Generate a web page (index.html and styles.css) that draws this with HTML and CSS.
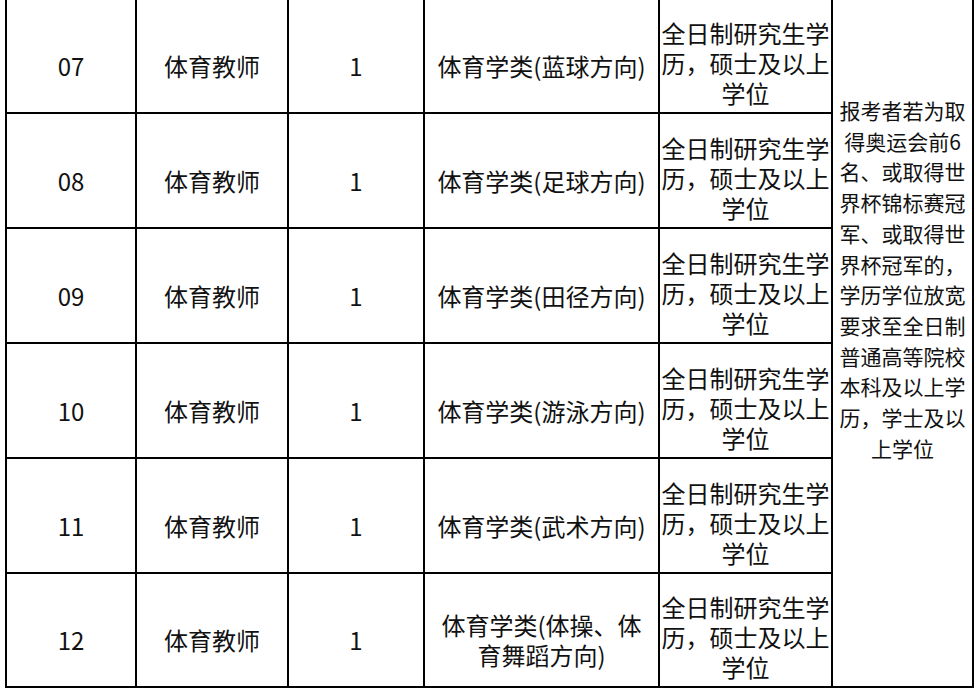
FILE: index.html
```html
<!DOCTYPE html>
<html lang="zh-CN">
<head>
<meta charset="utf-8">
<title>招聘岗位表</title>
<link rel="stylesheet" href="styles.css">
</head>
<body>
<table class="grid">
  <colgroup>
    <col class="col-no">
    <col class="col-post">
    <col class="col-num">
    <col class="col-major">
    <col class="col-edu">
    <col class="col-note">
  </colgroup>
  <tbody>
    <tr class="row">
      <td class="cell first">07</td>
      <td class="cell">体育教师</td>
      <td class="cell">1</td>
      <td class="cell">体育学类(蓝球方向)</td>
      <td class="cell edu"><div class="edu-text">全日制研究生学<br>历，硕士及以上<br>学位</div></td>
      <td class="cell note" rowspan="6"><div class="note-text">报考者若为取<br>得奥运会前6<br>名、或取得世<br>界杯锦标赛冠<br>军、或取得世<br>界杯冠军的，<br>学历学位放宽<br>要求至全日制<br>普通高等院校<br>本科及以上学<br>历，学士及以<br>上学位</div></td>
    </tr>
    <tr class="row">
      <td class="cell first">08</td>
      <td class="cell">体育教师</td>
      <td class="cell">1</td>
      <td class="cell">体育学类(足球方向)</td>
      <td class="cell edu"><div class="edu-text">全日制研究生学<br>历，硕士及以上<br>学位</div></td>
    </tr>
    <tr class="row">
      <td class="cell first">09</td>
      <td class="cell">体育教师</td>
      <td class="cell">1</td>
      <td class="cell">体育学类(田径方向)</td>
      <td class="cell edu"><div class="edu-text">全日制研究生学<br>历，硕士及以上<br>学位</div></td>
    </tr>
    <tr class="row">
      <td class="cell first">10</td>
      <td class="cell">体育教师</td>
      <td class="cell">1</td>
      <td class="cell">体育学类(游泳方向)</td>
      <td class="cell edu"><div class="edu-text">全日制研究生学<br>历，硕士及以上<br>学位</div></td>
    </tr>
    <tr class="row">
      <td class="cell first">11</td>
      <td class="cell">体育教师</td>
      <td class="cell">1</td>
      <td class="cell">体育学类(武术方向)</td>
      <td class="cell edu"><div class="edu-text">全日制研究生学<br>历，硕士及以上<br>学位</div></td>
    </tr>
    <tr class="row last">
      <td class="cell first">12</td>
      <td class="cell">体育教师</td>
      <td class="cell">1</td>
      <td class="cell two">体育学类(体操、体<br>育舞蹈方向)</td>
      <td class="cell edu"><div class="edu-text">全日制研究生学<br>历，硕士及以上<br>学位</div></td>
    </tr>
  </tbody>
</table>
</body>
</html>
```

FILE: styles.css
```css
html, body {
  margin: 0;
  padding: 0;
  background: #ffffff;
}

body {
  font-family: "Noto Sans CJK SC", "Microsoft YaHei", "Noto Sans", sans-serif;
  color: #111111;
  overflow: hidden;
}

.grid {
  table-layout: fixed;
  border-collapse: separate;
  border-spacing: 0;
  width: 969px;
  margin: -1px 0 0 5px;
}

.col-no { width: 132px; }
.col-post { width: 152px; }
.col-num { width: 136px; }
.col-major { width: 235px; }
.col-edu { width: 173px; }
.col-note { width: 141px; }

.row { height: 115px; }
.row.last { height: 114px; }

.cell {
  box-sizing: border-box;
  border-right: 2px solid #000;
  border-bottom: 2px solid #000;
  padding: 20px 0 0 0;
  text-align: center;
  vertical-align: middle;
  font-size: 24px;
  line-height: 30px;
  white-space: nowrap;
  overflow: visible;
}

.cell.first {
  border-left: 2px solid #000;
}

.cell.edu {
  padding-top: 6px;
}

.edu-text {
  margin-bottom: -8px;
  line-height: 30px;
}

.cell.note {
  vertical-align: top;
  padding-top: 96px;
  font-size: 21px;
  line-height: 30.7px;
}

.note-text {
  text-align: center;
}
```
